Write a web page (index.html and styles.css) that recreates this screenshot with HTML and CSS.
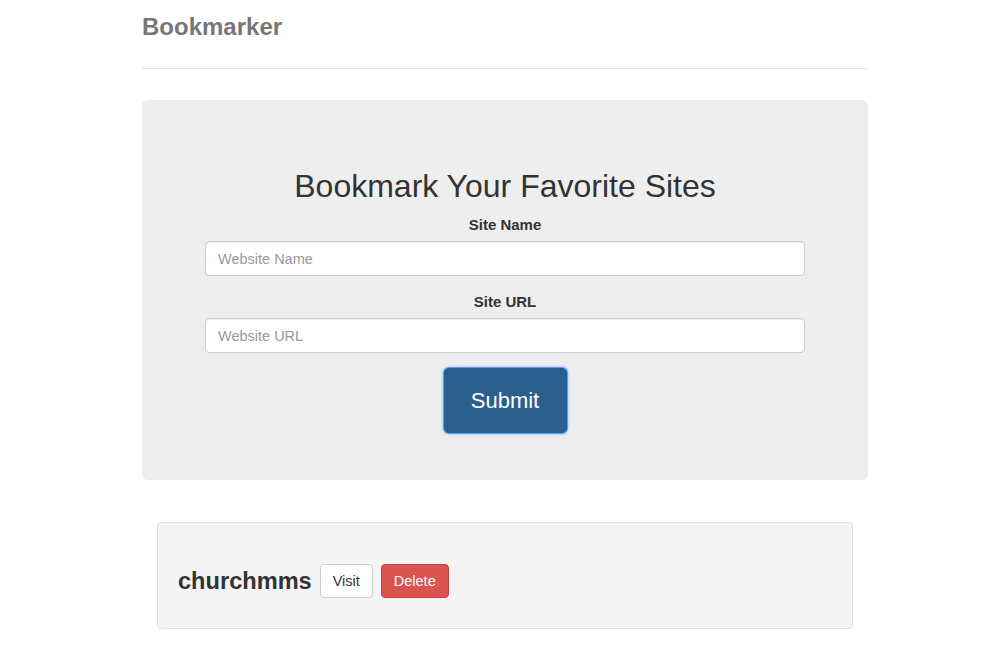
FILE: index.html
```html
<!DOCTYPE html>
<html>
<head>
<meta charset="utf-8">
<title>Bookmarker</title>
<link rel="stylesheet" href="styles.css">
</head>
<body>
<div class="container">
  <div class="header">
    <h3 class="brand">Bookmarker</h3>
  </div>
  <div class="jumbotron">
    <h2 class="title">Bookmark Your Favorite Sites</h2>
    <form class="form">
      <div class="form-group">
        <label class="label">Site Name</label>
        <input class="input" type="text" placeholder="Website Name">
      </div>
      <div class="form-group">
        <label class="label">Site URL</label>
        <input class="input" type="text" placeholder="Website URL">
      </div>
      <button type="button" class="btn-submit">Submit</button>
    </form>
  </div>
  <div class="results">
    <div class="well">
      <h3 class="site-name">churchmms</h3>
      <a class="btn btn-default">Visit</a>
      <a class="btn btn-danger">Delete</a>
    </div>
  </div>
</div>
</body>
</html>
```
FILE: styles.css
```css
html, body {
  margin: 0;
  padding: 0;
  background: #fff;
}
body {
  padding-left: 10px;
  font-family: "Liberation Sans", Arial, sans-serif;
  color: #333;
}
.container {
  width: 726px;
  margin: 0 auto;
}
.header {
  padding-top: 14px;
  padding-bottom: 28px;
  border-bottom: 1px solid #e5e5e5;
}
.brand {
  margin: 0;
  font-size: 24px;
  line-height: 26px;
  font-weight: bold;
  color: #777;
}
.jumbotron {
  margin-top: 31px;
  background: #eee;
  border-radius: 6px;
  padding: 69px 0 47px;
  display: flex;
  flex-direction: column;
  align-items: center;
}
.title {
  margin: 0;
  font-size: 32px;
  line-height: 35px;
  font-weight: normal;
  color: #333;
  text-align: center;
}
.form {
  width: 600px;
  margin-top: 11px;
  display: flex;
  flex-direction: column;
  align-items: center;
}
.form-group {
  width: 100%;
  display: flex;
  flex-direction: column;
  align-items: center;
  margin-bottom: 15px;
}
.form-group + .form-group {
  margin-top: 1px;
}
.label {
  font-size: 15px;
  line-height: 20px;
  font-weight: bold;
  margin-bottom: 6px;
}
.input {
  box-sizing: border-box;
  width: 100%;
  height: 35px;
  padding: 6px 12px;
  font-family: "Liberation Sans", Arial, sans-serif;
  font-size: 14.5px;
  color: #555;
  background: #fff;
  border: 1px solid #ccc;
  border-radius: 4px;
  box-shadow: inset 0 1px 1px rgba(0,0,0,.075);
  outline: none;
}
.input::placeholder {
  color: #999;
}
.btn-submit {
  box-sizing: border-box;
  width: 123px;
  height: 65px;
  font-family: "Liberation Sans", Arial, sans-serif;
  font-size: 22px;
  color: #fff;
  background: #2a5f8c;
  border: 1px solid #1f5fa8;
  border-radius: 5px;
  box-shadow: 0 0 0 1px #5a9cf0, 0 0 3px 1px rgba(90,156,240,.7);
  cursor: pointer;
}
.results {
  padding: 42px 15px 0;
}
.well {
  box-sizing: border-box;
  height: 107px;
  background: #f4f4f4;
  border: 1px solid #e0e0e0;
  border-radius: 4px;
  padding: 10px 19px 0 20px;
  display: flex;
  align-items: center;
  gap: 8px;
}
.site-name {
  margin: 0;
  font-size: 23.6px;
  line-height: 26px;
  font-weight: bold;
  color: #333;
}
.btn {
  box-sizing: border-box;
  display: inline-flex;
  align-items: center;
  justify-content: center;
  height: 34px;
  padding: 0 12px;
  font-size: 14.5px;
  border-radius: 4px;
  border: 1px solid transparent;
}
.btn-default {
  width: 53px;
  color: #333;
  background: #fff;
  border-color: #ccc;
}
.btn-danger {
  width: 68px;
  color: #fff;
  background: #d9534f;
  border-color: #d43f3a;
}
```
